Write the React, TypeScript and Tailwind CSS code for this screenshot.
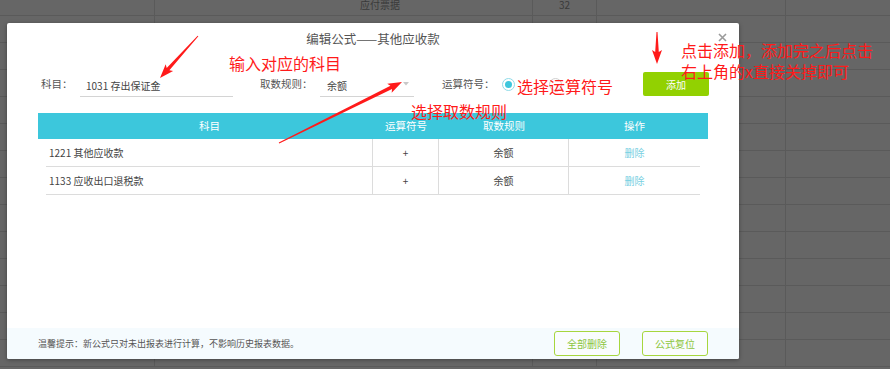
import React from 'react';

type Pt = [number, number];

// spreadsheet behind the dialog
const colWidths = [155, 378, 64, 189];
const rowCount = 14;

const tableRows = [
  { name: '1221 其他应收款', op: '+', rule: '余额' },
  { name: '1133 应收出口退税款', op: '+', rule: '余额' },
];

const arrows: { from: Pt; to: Pt }[] = [
  { from: [198, 36], to: [160, 78] },
  { from: [279, 143], to: [402, 82] },
  { from: [657, 32], to: [657, 64] },
];

function arrowPoints(from: Pt, to: Pt): string {
  const dx = to[0] - from[0];
  const dy = to[1] - from[1];
  const len = Math.hypot(dx, dy);
  const ux = dx / len;
  const uy = dy / len;
  const nx = -uy;
  const ny = ux;
  const head = 12;
  const neck: Pt = [to[0] - ux * head, to[1] - uy * head];
  const barb: Pt = [to[0] - ux * (head + 2), to[1] - uy * (head + 2)];
  const p = (b: Pt, w: number): string => `${b[0] + nx * w},${b[1] + ny * w}`;
  return [
    p(from, 0.5),
    p(neck, 1.8),
    p(barb, 5),
    `${to[0]},${to[1]}`,
    p(barb, -5),
    p(neck, -1.8),
    p(from, -0.5),
  ].join(' ');
}

const Sheet: React.FC = () => (
  <div className="flex flex-col">
    {Array.from({ length: rowCount }).map((_, r) => (
      <div
        key={r}
        className={`flex border-b border-[#5a5a5a] ${r === 0 ? 'h-[16px]' : 'h-[27px]'}`}
      >
        {colWidths.map((w, c) => (
          <div
            key={c}
            style={{ width: w }}
            className="shrink-0 border-r border-[#5a5a5a] relative"
          >
            {r === 0 && c === 1 && (
              <span className="absolute left-[205px] -top-[3px] text-[10px] text-[#3a3a3a]">应付票据</span>
            )}
            {r === 0 && c === 2 && (
              <span className="absolute left-[26px] -top-[3px] text-[10px] text-[#3a3a3a]">32</span>
            )}
          </div>
        ))}
        <div className="flex-1" />
      </div>
    ))}
  </div>
);

const Dialog: React.FC = () => (
  <div className="absolute left-[7px] top-[23px] w-[732px] h-[336px] bg-white rounded-[2px] shadow-[0_1px_4px_rgba(0,0,0,0.35)] flex flex-col">
    {/* title */}
    <div className="h-[32px] relative flex items-center justify-center">
      <span className="text-[12.5px] text-[#555] pt-[1px]">编辑公式——其他应收款</span>
      <svg className="absolute right-[12px] top-[10px]" width="9" height="9" viewBox="0 0 9 9">
        <path d="M1 1 L8 8 M8 1 L1 8" stroke="#9a9a9a" strokeWidth="1.6" />
      </svg>
    </div>

    {/* form row */}
    <div className="mt-[17px] h-[24px] flex items-center text-[10.5px] text-[#555]">
      <span className="ml-[34px] w-[39px]">科目：</span>
      <div className="w-[153px] h-[22px] border-b border-[#d4d4d4] flex items-center pl-[6px] text-[#444] text-[10px] mt-[3px]">
        1031 存出保证金
      </div>
      <span className="ml-[27px] w-[60px]">取数规则：</span>
      <div className="w-[94px] h-[22px] border-b border-[#d4d4d4] flex items-center justify-between pl-[7px] pr-[5px] text-[#444] text-[10px] mt-[3px]">
        <span>余额</span>
        <svg width="6" height="4" viewBox="0 0 6 4" className="-mt-[3px]">
          <path d="M0 0 L6 0 L3 3.5 Z" fill="#c8c8c8" />
        </svg>
      </div>
      <span className="ml-[28px] w-[60px]">运算符号：</span>
      <span className="w-[13px] h-[13px] rounded-full border border-[#8fdbe8] flex items-center justify-center">
        <span className="w-[7px] h-[7px] rounded-full bg-[#3ec6dc]" />
      </span>
      <span className="ml-[34px] w-[13px] h-[13px] rounded-full border border-[#d0d0d0]" />
      <button className="ml-[81px] w-[66px] h-[24px] rounded-[2px] bg-[#92d101] text-white text-[10px]">
        添加
      </button>
    </div>

    {/* table */}
    <div className="mt-[17px] mx-[31px]">
      <div className="h-[26px] bg-[#3cc7dc] px-[8px] flex items-center text-white text-[10.5px]">
        <div className="w-[327px] text-center">科目</div>
        <div className="w-[66px] text-center">运算符号</div>
        <div className="w-[130px] text-center">取数规则</div>
        <div className="flex-1 text-center">操作</div>
      </div>
      <div className="mx-[8px] text-[10px] text-[#444]">
        {tableRows.map((row) => (
          <div key={row.name} className="h-[28px] flex border-b border-[#dcdcdc]">
            <div className="w-[327px] flex items-center pl-[3px] border-r border-[#dcdcdc]">{row.name}</div>
            <div className="w-[66px] flex items-center justify-center border-r border-[#dcdcdc]">{row.op}</div>
            <div className="w-[130px] flex items-center justify-center border-r border-[#dcdcdc]">{row.rule}</div>
            <div className="flex-1 flex items-center justify-center text-[#78d0e2]">删除</div>
          </div>
        ))}
      </div>
    </div>

    <div className="flex-1" />

    {/* footer */}
    <div className="h-[31px] bg-[#f5fbfe] flex items-center pl-[31px] pr-[31px] rounded-b-[2px]">
      <span className="text-[9px] text-[#555] flex-1">温馨提示：新公式只对未出报表进行计算，不影响历史报表数据。</span>
      <button className="w-[66px] h-[25px] rounded-[3px] border border-[#a6d63e] text-[#8cc63c] text-[10px] bg-white/40">
        全部删除
      </button>
      <button className="ml-[22px] w-[66px] h-[25px] rounded-[3px] border border-[#a6d63e] text-[#8cc63c] text-[10px] bg-white/40">
        公式复位
      </button>
    </div>
  </div>
);

const App: React.FC = () => {
  return (
    <div
      className="relative w-[890px] h-[369px] overflow-hidden bg-[#666666]"
      style={{ fontFamily: '"Noto Sans CJK SC", "Noto Sans", sans-serif' }}
    >
      <Sheet />
      <Dialog />

      {/* red annotations */}
      <div className="absolute left-[229px] top-[55px] text-[16px] leading-[16px] text-[#ff1a1a]">输入对应的科目</div>
      <div className="absolute left-[517px] top-[78px] text-[16px] leading-[16px] text-[#ff1a1a]">选择运算符号</div>
      <div className="absolute left-[411px] top-[103px] text-[16px] leading-[16px] text-[#ff1a1a]">选择取数规则</div>
      <div className="absolute left-[681px] top-[40px] text-[16px] leading-[21px] text-[#ff1a1a]">
        点击添加，添加完之后点击
        <br />
        右上角的x直接关掉即可
      </div>

      <svg className="absolute inset-0 pointer-events-none" width="890" height="369">
        {arrows.map((a, i) => (
          <polygon key={i} points={arrowPoints(a.from, a.to)} fill="#ff1a1a" />
        ))}
      </svg>
    </div>
  );
};

export default App;
